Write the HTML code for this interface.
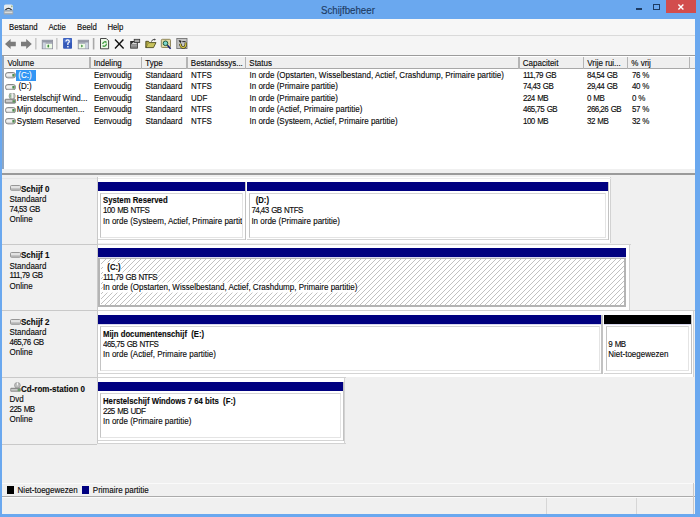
<!DOCTYPE html>
<html><head><meta charset="utf-8">
<style>
*{margin:0;padding:0;box-sizing:border-box}
html,body{width:700px;height:517px;overflow:hidden;background:#6aa8ef;font-family:"Liberation Sans",sans-serif;font-size:8px;color:#0a0a0a}
.a{position:absolute}
.t{position:absolute;white-space:pre;line-height:10px;-webkit-text-stroke:0.12px currentColor;transform:scaleY(1.14);transform-origin:0 4.7px}
.b{font-weight:bold}
</style></head><body>

<svg class="a" style="left:3px;top:4px" width="11" height="11" viewBox="0 0 11 11">
<rect x="1" y="0.6" width="9" height="5.6" rx="1.6" fill="#e6eaec"/>
<path d="M2.4 6 Q5.5 2.8 8.6 6" fill="none" stroke="#333" stroke-width="1.3"/>
<rect x="8" y="1.6" width="1.6" height="1.6" fill="#9ab88a"/>
<rect x="0.8" y="6.2" width="9.4" height="4.4" rx="0.6" fill="#a0a8b0"/>
<rect x="1.6" y="7.6" width="7.8" height="1.5" fill="#d8dcdf"/>
</svg>
<div class="t" style="left:321px;top:4px;font-size:9.7px;line-height:12px;color:#1d3b63">Schijfbeheer</div>
<div class="a" style="left:636px;top:8px;width:6px;height:2px;background:#1d3b63"></div>
<div class="a" style="left:653px;top:4.2px;width:7.2px;height:5.8px;border:1px solid #1d3b63;border-top-width:1.8px"></div>
<div class="a" style="left:666px;top:0px;width:29.6px;height:13.2px;background:#d24d4d"></div>
<svg class="a" style="left:677.3px;top:2.8px" width="8" height="8" viewBox="0 0 8 8"><path d="M1.4 1.4L6.4 6.4M6.4 1.4L1.4 6.4" stroke="#fff" stroke-width="1.4"/></svg>
<div class="a" style="left:2px;top:19px;width:693px;height:495px;background:#f0f0f0"></div>
<div class="a" style="left:2px;top:19px;width:693px;height:16px;background:#f7f7f7"></div>
<div class="t" style="left:9px;top:22.5px;font-size:7.8px">Bestand</div>
<div class="t" style="left:48.4px;top:22.5px;font-size:7.8px">Actie</div>
<div class="t" style="left:77px;top:22.5px;font-size:7.8px">Beeld</div>
<div class="t" style="left:107.4px;top:22.5px;font-size:7.8px">Help</div>
<div class="a" style="left:2px;top:35px;width:693px;height:1px;background:#dadada"></div>
<div class="a" style="left:2px;top:36px;width:693px;height:19px;background:#f5f5f5"></div>
<div class="a" style="left:2px;top:54.8px;width:693px;height:1.8px;background:#9c9c9c"></div>
<svg class="a" style="left:0px;top:34px" width="200" height="22" viewBox="0 34 200 22">
<path d="M5 44 L10.6 39 L10.6 41.8 L15.8 41.8 L15.8 46.2 L10.6 46.2 L10.6 49 Z" fill="#7c7c7c"/>
<path d="M31.8 44 L26.2 39 L26.2 41.8 L21 41.8 L21 46.2 L26.2 46.2 L26.2 49 Z" fill="#7c7c7c"/>
<rect x="35" y="38" width="1.6" height="11.5" fill="#c9c9c9"/>
<rect x="42.2" y="40.2" width="10.4" height="8.6" fill="#aeb2be" stroke="#8c909c" stroke-width="0.8"/>
<rect x="42.6" y="40.6" width="9.6" height="1.8" fill="#9498a6"/>
<rect x="43" y="42.6" width="2.6" height="5.8" fill="#ccd3e0"/>
<rect x="45.9" y="43.9" width="6.2" height="4.4" fill="#eefbe6"/>
<ellipse cx="48.3" cy="46.1" rx="0.9" ry="1.5" fill="#3c8c3c"/>
<rect x="56" y="38" width="1.6" height="11.5" fill="#c9c9c9"/>
<rect x="63.1" y="38.1" width="8.9" height="10.7" rx="0.8" fill="#3458b8"/>
<rect x="63.6" y="38.6" width="7.9" height="4" fill="#4a70cc"/>
<path d="M65.9 41.4 Q65.9 39.8 67.6 39.8 Q69.3 39.8 69.3 41.4 Q69.3 42.5 67.9 43.2 L67.9 45" fill="none" stroke="#fff" stroke-width="1.2"/>
<rect x="67.2" y="46" width="1.4" height="1.4" fill="#fff"/>
<rect x="78.2" y="40.2" width="10.4" height="8.6" fill="#aeb2be" stroke="#8c909c" stroke-width="0.8"/>
<rect x="78.6" y="40.6" width="9.6" height="1.8" fill="#9498a6"/>
<rect x="85.4" y="42.6" width="2.8" height="5.8" fill="#ccd3e0"/>
<rect x="78.8" y="43.9" width="6.2" height="4.4" fill="#eefbe6"/>
<path d="M81.2 44.6 L83.2 46.1 L81.2 47.6 Z" fill="#3c8c3c"/>
<rect x="92.8" y="38" width="1.6" height="11.5" fill="#a8a8a8"/>
<path d="M100.5 38.5 L106.3 38.5 L108.6 40.8 L108.6 48.8 L100.5 48.8 Z" fill="#eef8ea" stroke="#333" stroke-width="0.9"/>
<path d="M102.8 44 A2.2 2.2 0 0 1 106.5 42.4" fill="none" stroke="#3a9a3a" stroke-width="1.3"/>
<path d="M106.3 43.6 A2.2 2.2 0 0 1 102.6 45.6" fill="none" stroke="#3a9a3a" stroke-width="1.3"/>
<path d="M115 39.6 L123.6 48.4 M123.4 39.6 L115 48.4" stroke="#111" stroke-width="1.4"/>
<rect x="130.2" y="41" width="7.6" height="7.6" fill="#2a2a2a"/>
<path d="M131.2 44.2 L133.6 42 L136.8 42 L136.8 44.2 Z" fill="#d8d8d8"/>
<rect x="131" y="44.6" width="6" height="1" fill="#e8e8e8"/>
<rect x="131" y="46" width="6" height="1.8" fill="#8a8a8a"/>
<rect x="134.2" y="39.3" width="5.5" height="3.2" fill="#a8a8a8" stroke="#333" stroke-width="0.8"/>
<path d="M145.8 47.6 L148.2 42.6 L156 42.6 L153.5 47.6 Z" fill="#c8c25c" stroke="#3a3a10" stroke-width="0.8"/>
<path d="M145.8 47.6 L145.8 41.3 L148.5 41.3 L149.3 42.2" fill="#a8a040" stroke="#3a3a10" stroke-width="0.8"/>
<path d="M151.4 41.6 Q152.2 39 154.8 39.4" fill="none" stroke="#333" stroke-width="0.9"/>
<path d="M154.4 38.6 L155.9 39.6 L154.4 40.8 Z" fill="#333"/>
<rect x="161.3" y="39.3" width="9.2" height="8.2" rx="1" fill="#e2d9a6" stroke="#7a7040" stroke-width="0.8"/>
<circle cx="165.5" cy="43.3" r="2.3" fill="#7cd4cc" stroke="#1e5a3e" stroke-width="1"/>
<path d="M167.4 45.3 L170.6 48.7" stroke="#101a70" stroke-width="1.6"/>
<rect x="176.8" y="38.4" width="10.2" height="10.2" fill="#c6c6c6" stroke="#6a6a6a" stroke-width="0.8"/>
<path d="M178.5 40.5 Q180 39.6 181.5 41 L180.5 43.2 Z" fill="#222"/>
<path d="M182.3 41.6 L185.6 41.6" stroke="#333" stroke-width="1.1"/>
<path d="M180.2 43.8 Q181 47.8 183.6 47.6 Q186.2 47 185.8 42.6" fill="none" stroke="#2a2a10" stroke-width="2.4"/>
<path d="M180.2 43.8 Q181 47.8 183.6 47.6 Q186.2 47 185.8 42.6" fill="none" stroke="#d4c444" stroke-width="1.3"/>
</svg>
<div class="a" style="left:2px;top:56px;width:693px;height:118px;background:#fff"></div>
<div class="a" style="left:2px;top:56.6px;width:693px;height:12.4px;background:#efefef;border-bottom:1.2px solid #a8a8a8"></div>
<div class="a" style="left:2px;top:56px;width:1.6px;height:114px;background:#8ea6c2"></div>
<div class="a" style="left:89.2px;top:56.6px;width:1.4px;height:12.4px;background:#b4b4b4"></div>
<div class="a" style="left:140.7px;top:56.6px;width:1.4px;height:12.4px;background:#b4b4b4"></div>
<div class="a" style="left:186.2px;top:56.6px;width:1.4px;height:12.4px;background:#b4b4b4"></div>
<div class="a" style="left:244.7px;top:56.6px;width:1.4px;height:12.4px;background:#b4b4b4"></div>
<div class="a" style="left:518.2px;top:56.6px;width:1.4px;height:12.4px;background:#b4b4b4"></div>
<div class="a" style="left:582.7px;top:56.6px;width:1.4px;height:12.4px;background:#b4b4b4"></div>
<div class="a" style="left:626.7px;top:56.6px;width:1.4px;height:12.4px;background:#b4b4b4"></div>
<div class="a" style="left:688.7px;top:56.6px;width:1.4px;height:12.4px;background:#b4b4b4"></div>
<div class="t" style="left:7.4px;top:58.6px;">Volume</div>
<div class="t" style="left:93.8px;top:58.6px;">Indeling</div>
<div class="t" style="left:145.3px;top:58.6px;">Type</div>
<div class="t" style="left:190.8px;top:58.6px;">Bestandssys...</div>
<div class="t" style="left:249.3px;top:58.6px;">Status</div>
<div class="t" style="left:522.8px;top:58.6px;">Capaciteit</div>
<div class="t" style="left:587.3px;top:58.6px;">Vrije rui...</div>
<div class="t" style="left:631.3px;top:58.6px;">% vrij</div>
<svg class="a" style="left:4.6px;top:72.4px" width="11" height="6.5" viewBox="0 0 11 6.5"><rect x="0.5" y="0.5" width="10" height="5.4" rx="2.4" fill="#dadada" stroke="#7e7e7e" stroke-width="0.9"/><rect x="1.6" y="2" width="5.6" height="1.8" fill="#f4f4f4"/><rect x="7.4" y="2" width="2.2" height="2.6" fill="#4e8e4e"/></svg>
<div class="a" style="left:15.5px;top:69.7px;width:20.2px;height:11px;background:#3296f4"></div>
<div class="t" style="left:18.3px;top:70.5px;color:#fff">(C:)</div>
<div class="t" style="left:94px;top:70.5px;">Eenvoudig</div>
<div class="t" style="left:145.5px;top:70.5px;">Standaard</div>
<div class="t" style="left:191px;top:70.5px;">NTFS</div>
<div class="t" style="left:249.5px;top:70.5px;">In orde (Opstarten, Wisselbestand, Actief, Crashdump, Primaire partitie)</div>
<div class="t" style="left:523px;top:70.5px;letter-spacing:-0.55px;word-spacing:0.8px;">111,79 GB</div>
<div class="t" style="left:587px;top:70.5px;letter-spacing:-0.55px;word-spacing:0.8px;">84,54 GB</div>
<div class="t" style="left:632px;top:70.5px;letter-spacing:-0.55px;word-spacing:0.8px;">76 %</div>
<svg class="a" style="left:4.6px;top:83.9px" width="11" height="6.5" viewBox="0 0 11 6.5"><rect x="0.5" y="0.5" width="10" height="5.4" rx="2.4" fill="#dadada" stroke="#7e7e7e" stroke-width="0.9"/><rect x="1.6" y="2" width="5.6" height="1.8" fill="#f4f4f4"/><rect x="7.4" y="2" width="2.2" height="2.6" fill="#4e8e4e"/></svg>
<div class="t" style="left:18.4px;top:82.0px;">(D:)</div>
<div class="t" style="left:94px;top:82.0px;">Eenvoudig</div>
<div class="t" style="left:145.5px;top:82.0px;">Standaard</div>
<div class="t" style="left:191px;top:82.0px;">NTFS</div>
<div class="t" style="left:249.5px;top:82.0px;">In orde (Primaire partitie)</div>
<div class="t" style="left:523px;top:82.0px;letter-spacing:-0.55px;word-spacing:0.8px;">74,43 GB</div>
<div class="t" style="left:587px;top:82.0px;letter-spacing:-0.55px;word-spacing:0.8px;">29,44 GB</div>
<div class="t" style="left:632px;top:82.0px;letter-spacing:-0.55px;word-spacing:0.8px;">40 %</div>
<svg class="a" style="left:4px;top:92.5px" width="13" height="11" viewBox="0 0 13 11"><ellipse cx="8.1" cy="3" rx="3.1" ry="3.3" fill="#c4c8c4" stroke="#8c908c" stroke-width="0.7"/><path d="M5.4 1.6 Q5 3 5.4 4.6 L7.4 4.6 L7.4 1.4 Z" fill="#90b490"/><rect x="7.6" y="0.4" width="1.3" height="5" fill="#f2f2f2"/><rect x="1" y="6.2" width="10.6" height="4" rx="0.8" fill="#a4a4a4" stroke="#707070" stroke-width="0.7"/><rect x="2" y="7.4" width="6.4" height="1.2" fill="#e4e4e4"/><rect x="8.6" y="7.3" width="2.4" height="2.2" fill="#5a985a"/></svg>
<div class="t" style="left:16.8px;top:93.5px;">Herstelschijf Wind...</div>
<div class="t" style="left:94px;top:93.5px;">Eenvoudig</div>
<div class="t" style="left:145.5px;top:93.5px;">Standaard</div>
<div class="t" style="left:191px;top:93.5px;">UDF</div>
<div class="t" style="left:249.5px;top:93.5px;">In orde (Primaire partitie)</div>
<div class="t" style="left:523px;top:93.5px;letter-spacing:-0.55px;word-spacing:0.8px;">224 MB</div>
<div class="t" style="left:587px;top:93.5px;letter-spacing:-0.55px;word-spacing:0.8px;">0 MB</div>
<div class="t" style="left:632px;top:93.5px;letter-spacing:-0.55px;word-spacing:0.8px;">0 %</div>
<svg class="a" style="left:4.6px;top:106.9px" width="11" height="6.5" viewBox="0 0 11 6.5"><rect x="0.5" y="0.5" width="10" height="5.4" rx="2.4" fill="#dadada" stroke="#7e7e7e" stroke-width="0.9"/><rect x="1.6" y="2" width="5.6" height="1.8" fill="#f4f4f4"/><rect x="7.4" y="2" width="2.2" height="2.6" fill="#4e8e4e"/></svg>
<div class="t" style="left:16.8px;top:105.0px;">Mijn documenten...</div>
<div class="t" style="left:94px;top:105.0px;">Eenvoudig</div>
<div class="t" style="left:145.5px;top:105.0px;">Standaard</div>
<div class="t" style="left:191px;top:105.0px;">NTFS</div>
<div class="t" style="left:249.5px;top:105.0px;">In orde (Actief, Primaire partitie)</div>
<div class="t" style="left:523px;top:105.0px;letter-spacing:-0.55px;word-spacing:0.8px;">465,75 GB</div>
<div class="t" style="left:587px;top:105.0px;letter-spacing:-0.55px;word-spacing:0.8px;">266,26 GB</div>
<div class="t" style="left:632px;top:105.0px;letter-spacing:-0.55px;word-spacing:0.8px;">57 %</div>
<svg class="a" style="left:4.6px;top:118.4px" width="11" height="6.5" viewBox="0 0 11 6.5"><rect x="0.5" y="0.5" width="10" height="5.4" rx="2.4" fill="#dadada" stroke="#7e7e7e" stroke-width="0.9"/><rect x="1.6" y="2" width="5.6" height="1.8" fill="#f4f4f4"/><rect x="7.4" y="2" width="2.2" height="2.6" fill="#4e8e4e"/></svg>
<div class="t" style="left:16.8px;top:116.5px;">System Reserved</div>
<div class="t" style="left:94px;top:116.5px;">Eenvoudig</div>
<div class="t" style="left:145.5px;top:116.5px;">Standaard</div>
<div class="t" style="left:191px;top:116.5px;">NTFS</div>
<div class="t" style="left:249.5px;top:116.5px;">In orde (Systeem, Actief, Primaire partitie)</div>
<div class="t" style="left:523px;top:116.5px;letter-spacing:-0.55px;word-spacing:0.8px;">100 MB</div>
<div class="t" style="left:587px;top:116.5px;letter-spacing:-0.55px;word-spacing:0.8px;">32 MB</div>
<div class="t" style="left:632px;top:116.5px;letter-spacing:-0.55px;word-spacing:0.8px;">32 %</div>
<div class="a" style="left:2px;top:169px;width:693px;height:4px;background:#f0f0f0"></div>
<div class="a" style="left:2px;top:173px;width:693px;height:1.6px;background:#9a9a9a"></div>
<div class="a" style="left:97px;top:177.1px;width:513.5px;height:66px;background:#fff;border-right:1px solid #d2d2d2"></div>
<svg class="a" style="left:10px;top:185.1px" width="11" height="6" viewBox="0 0 11 6"><rect x="0.5" y="0.5" width="10" height="4.8" rx="1" fill="#e2e2e2" stroke="#8c8c8c" stroke-width="0.9"/><rect x="1" y="3.4" width="9" height="1.5" fill="#b0b0b0"/></svg>
<div class="t" style="left:21px;top:184.6px;font-weight:bold">Schijf 0</div>
<div class="t" style="left:9.5px;top:194.8px;">Standaard</div>
<div class="t" style="left:9.5px;top:204.60000000000002px;letter-spacing:-0.55px;word-spacing:0.8px;">74,53 GB</div>
<div class="t" style="left:9.5px;top:214.8px;">Online</div>
<div class="a" style="left:2px;top:178px;width:95px;height:1px;background:#e6e6e6"></div>
<div class="a" style="left:97px;top:178px;width:514.5px;height:1px;background:#ececec"></div>
<div class="a" style="left:97px;top:243.89999999999998px;width:532.5px;height:66px;background:#fff;border-right:1px solid #d2d2d2"></div>
<svg class="a" style="left:10px;top:251.89999999999998px" width="11" height="6" viewBox="0 0 11 6"><rect x="0.5" y="0.5" width="10" height="4.8" rx="1" fill="#e2e2e2" stroke="#8c8c8c" stroke-width="0.9"/><rect x="1" y="3.4" width="9" height="1.5" fill="#b0b0b0"/></svg>
<div class="t" style="left:21px;top:251.39999999999998px;font-weight:bold">Schijf 1</div>
<div class="t" style="left:9.5px;top:261.59999999999997px;">Standaard</div>
<div class="t" style="left:9.5px;top:271.4px;letter-spacing:-0.55px;word-spacing:0.8px;">111,79 GB</div>
<div class="t" style="left:9.5px;top:281.59999999999997px;">Online</div>
<div class="a" style="left:2px;top:243.59999999999997px;width:95px;height:1px;background:#c9c9c9"></div>
<div class="a" style="left:97px;top:243.59999999999997px;width:533.5px;height:1px;background:#d2d2d2"></div>
<div class="a" style="left:97px;top:310.7px;width:596.5px;height:66px;background:#fff;border-right:1px solid #d2d2d2"></div>
<svg class="a" style="left:10px;top:318.7px" width="11" height="6" viewBox="0 0 11 6"><rect x="0.5" y="0.5" width="10" height="4.8" rx="1" fill="#e2e2e2" stroke="#8c8c8c" stroke-width="0.9"/><rect x="1" y="3.4" width="9" height="1.5" fill="#b0b0b0"/></svg>
<div class="t" style="left:21px;top:318.2px;font-weight:bold">Schijf 2</div>
<div class="t" style="left:9.5px;top:328.4px;">Standaard</div>
<div class="t" style="left:9.5px;top:338.2px;letter-spacing:-0.55px;word-spacing:0.8px;">465,76 GB</div>
<div class="t" style="left:9.5px;top:348.4px;">Online</div>
<div class="a" style="left:2px;top:310.4px;width:95px;height:1px;background:#c9c9c9"></div>
<div class="a" style="left:97px;top:310.4px;width:597.5px;height:1px;background:#d2d2d2"></div>
<div class="a" style="left:97px;top:377.5px;width:248px;height:66px;background:#fff;border-right:1px solid #d2d2d2"></div>
<svg class="a" style="left:10px;top:382.0px" width="12" height="11" viewBox="0 0 12 11"><circle cx="7.4" cy="3.3" r="2.9" fill="#bdbdbd" stroke="#8a8a8a" stroke-width="0.6"/><rect x="6.9" y="0.6" width="1.1" height="2.8" fill="#f4f4f4"/><rect x="0.3" y="5.8" width="10.4" height="4" rx="1" fill="#8c8c8c"/><rect x="1.2" y="7.2" width="6.5" height="1.3" fill="#d8d8d8"/><rect x="7.8" y="6.8" width="2.6" height="2.4" fill="#6a9a6a"/></svg>
<div class="t" style="left:21px;top:385.0px;font-weight:bold">Cd-rom-station 0</div>
<div class="t" style="left:9.5px;top:395.2px;">Dvd</div>
<div class="t" style="left:9.5px;top:405.0px;letter-spacing:-0.55px;word-spacing:0.8px;">225 MB</div>
<div class="t" style="left:9.5px;top:415.2px;">Online</div>
<div class="a" style="left:2px;top:377.2px;width:95px;height:1px;background:#c9c9c9"></div>
<div class="a" style="left:97px;top:377.2px;width:249px;height:1px;background:#d2d2d2"></div>
<div class="a" style="left:2px;top:444.29999999999995px;width:95px;height:1px;background:#c9c9c9"></div>
<div class="a" style="left:97px;top:177.1px;width:1px;height:266.7px;background:#c9c9c9"></div>
<div class="a" style="left:97px;top:443.0px;width:249px;height:1px;background:#d2d2d2"></div>
<div class="a" style="left:98.3px;top:181.6px;width:147.0px;height:9px;background:#000080"></div>
<div class="a" style="left:98.3px;top:190.6px;width:147.0px;height:1px;background:#d8d8ee"></div>
<div class="a" style="left:98.3px;top:190.9px;width:147.0px;height:49.5px;background:#fff;border-bottom:1px solid #d4d4d4"></div>
<div class="a" style="left:244.70000000000002px;top:181.6px;width:1.2px;height:58.79999999999998px;background:#c2c2c2"></div>
<div class="a" style="left:100.3px;top:192.7px;width:143.0px;height:45px;border:1px solid #e4e4e4;border-left:1.4px solid #c4c4c4;border-top-color:#d4d4d4"></div>
<div class="t" style="left:103.0px;top:196.1px;width:138.5px;overflow:hidden;font-weight:bold;font-size:7.75px;">System Reserved</div>
<div class="t" style="left:103.0px;top:206.29999999999998px;width:138.5px;overflow:hidden;letter-spacing:-0.55px;word-spacing:0.8px;">100 MB NTFS</div>
<div class="t" style="left:103.0px;top:216.5px;width:138.5px;overflow:hidden;">In orde (Systeem, Actief, Primaire partitie)</div>
<div class="a" style="left:246.7px;top:181.6px;width:361.8px;height:9px;background:#000080"></div>
<div class="a" style="left:246.7px;top:190.6px;width:361.8px;height:1px;background:#d8d8ee"></div>
<div class="a" style="left:246.7px;top:190.9px;width:361.8px;height:49.5px;background:#fff;border-bottom:1px solid #d4d4d4"></div>
<div class="a" style="left:607.9px;top:181.6px;width:1.2px;height:58.79999999999998px;background:#c2c2c2"></div>
<div class="a" style="left:248.7px;top:192.7px;width:357.8px;height:45px;border:1px solid #e4e4e4;border-left:1.4px solid #c4c4c4;border-top-color:#d4d4d4"></div>
<div class="t" style="left:251.39999999999998px;top:196.1px;width:353.3px;overflow:hidden;font-weight:bold;font-size:7.75px;">  (D:)</div>
<div class="t" style="left:251.39999999999998px;top:206.29999999999998px;width:353.3px;overflow:hidden;letter-spacing:-0.55px;word-spacing:0.8px;">74,43 GB NTFS</div>
<div class="t" style="left:251.39999999999998px;top:216.5px;width:353.3px;overflow:hidden;">In orde (Primaire partitie)</div>
<div class="a" style="left:98.3px;top:248.39999999999998px;width:528.2px;height:9px;background:#000080"></div>
<div class="a" style="left:98.3px;top:257.4px;width:528.2px;height:1px;background:#d8d8ee"></div>
<div class="a" style="left:98.3px;top:257.7px;width:528.2px;height:49.5px;background:#fff;border:2.5px solid #b4b4b4;border-top-width:1px"></div>
<svg class="a" style="left:100.8px;top:258.7px" width="523.2" height="46"><defs><pattern id="hp" width="5" height="5" patternUnits="userSpaceOnUse"><path d="M-1 6 L6 -1 M-1 1 L1 -1 M4 6 L6 4" stroke="#bababa" stroke-width="0.9"/></pattern></defs><rect width="100%" height="100%" fill="url(#hp)"/></svg>
<div class="t" style="left:103.0px;top:262.9px;width:519.7px;overflow:hidden;font-weight:bold;font-size:7.75px;"><span style="background:#fff">  (C:)</span></div>
<div class="t" style="left:103.0px;top:273.09999999999997px;width:519.7px;overflow:hidden;letter-spacing:-0.55px;word-spacing:0.8px;"><span style="background:#fff">111,79 GB NTFS</span></div>
<div class="t" style="left:103.0px;top:283.29999999999995px;width:519.7px;overflow:hidden;"><span style="background:#fff">In orde (Opstarten, Wisselbestand, Actief, Crashdump, Primaire partitie)</span></div>
<div class="a" style="left:98.3px;top:315.2px;width:503.7px;height:9px;background:#000080"></div>
<div class="a" style="left:98.3px;top:324.2px;width:503.7px;height:1px;background:#d8d8ee"></div>
<div class="a" style="left:98.3px;top:324.5px;width:503.7px;height:49.5px;background:#fff;border-bottom:1px solid #d4d4d4"></div>
<div class="a" style="left:601.4px;top:315.2px;width:1.2px;height:58.80000000000001px;background:#c2c2c2"></div>
<div class="a" style="left:100.3px;top:326.3px;width:499.7px;height:45px;border:1px solid #e4e4e4;border-left:1.4px solid #c4c4c4;border-top-color:#d4d4d4"></div>
<div class="t" style="left:103.0px;top:329.7px;width:495.2px;overflow:hidden;font-weight:bold;font-size:7.75px;">Mijn documentenschijf  (E:)</div>
<div class="t" style="left:103.0px;top:339.9px;width:495.2px;overflow:hidden;letter-spacing:-0.55px;word-spacing:0.8px;">465,75 GB NTFS</div>
<div class="t" style="left:103.0px;top:350.09999999999997px;width:495.2px;overflow:hidden;">In orde (Actief, Primaire partitie)</div>
<div class="a" style="left:603.6px;top:315.2px;width:87.89999999999998px;height:9px;background:#000000"></div>
<div class="a" style="left:603.6px;top:324.2px;width:87.89999999999998px;height:1px;background:#d8d8ee"></div>
<div class="a" style="left:603.6px;top:324.5px;width:87.89999999999998px;height:49.5px;background:#fff;border-bottom:1px solid #d4d4d4"></div>
<div class="a" style="left:690.9px;top:315.2px;width:1.2px;height:58.80000000000001px;background:#c2c2c2"></div>
<div class="a" style="left:605.6px;top:326.3px;width:83.89999999999998px;height:45px;border:1px solid #e4e4e4;border-left:1.4px solid #c4c4c4;border-top-color:#d4d4d4"></div>
<div class="t" style="left:608.3000000000001px;top:329.7px;width:79.39999999999998px;overflow:hidden;"></div>
<div class="t" style="left:608.3000000000001px;top:339.9px;width:79.39999999999998px;overflow:hidden;letter-spacing:-0.55px;word-spacing:0.8px;">9 MB</div>
<div class="t" style="left:608.3000000000001px;top:350.09999999999997px;width:79.39999999999998px;overflow:hidden;">Niet-toegewezen</div>
<div class="a" style="left:98.3px;top:382.0px;width:245.2px;height:9px;background:#000080"></div>
<div class="a" style="left:98.3px;top:391.0px;width:245.2px;height:1px;background:#d8d8ee"></div>
<div class="a" style="left:98.3px;top:391.3px;width:245.2px;height:49.5px;background:#fff;border-bottom:1px solid #d4d4d4"></div>
<div class="a" style="left:342.9px;top:382.0px;width:1.2px;height:58.80000000000001px;background:#c2c2c2"></div>
<div class="a" style="left:100.3px;top:393.1px;width:241.2px;height:45px;border:1px solid #e4e4e4;border-left:1.4px solid #c4c4c4;border-top-color:#d4d4d4"></div>
<div class="t" style="left:103.0px;top:396.5px;width:236.7px;overflow:hidden;font-weight:bold;font-size:7.75px;">Herstelschijf Windows 7 64 bits  (F:)</div>
<div class="t" style="left:103.0px;top:406.7px;width:236.7px;overflow:hidden;letter-spacing:-0.55px;word-spacing:0.8px;">225 MB UDF</div>
<div class="t" style="left:103.0px;top:416.9px;width:236.7px;overflow:hidden;">In orde (Primaire partitie)</div>
<div class="a" style="left:2px;top:483px;width:693px;height:1px;background:#fafafa"></div>
<div class="a" style="left:2px;top:484px;width:693px;height:12px;background:#f0f0f0"></div>
<div class="a" style="left:7px;top:486px;width:7.2px;height:8px;background:#000"></div>
<div class="t" style="left:17.6px;top:485.8px;">Niet-toegewezen</div>
<div class="a" style="left:82px;top:486px;width:7.4px;height:8px;background:#000080"></div>
<div class="t" style="left:92.8px;top:485.8px;">Primaire partitie</div>
<div class="a" style="left:2px;top:495.6px;width:693px;height:1.2px;background:#ababab"></div>
<div class="a" style="left:2px;top:497px;width:693px;height:17px;background:#f0f0f0"></div>
<div class="a" style="left:2px;top:497px;width:693px;height:1px;background:#fbfbfb"></div>
<div class="a" style="left:546.3px;top:498px;width:1px;height:15.5px;background:#d6d6d6"></div>
<div class="a" style="left:636.3px;top:498px;width:1px;height:15.5px;background:#d6d6d6"></div>
<div class="a" style="left:693px;top:483px;width:1px;height:31px;background:#c8c8c8"></div>
</body></html>
